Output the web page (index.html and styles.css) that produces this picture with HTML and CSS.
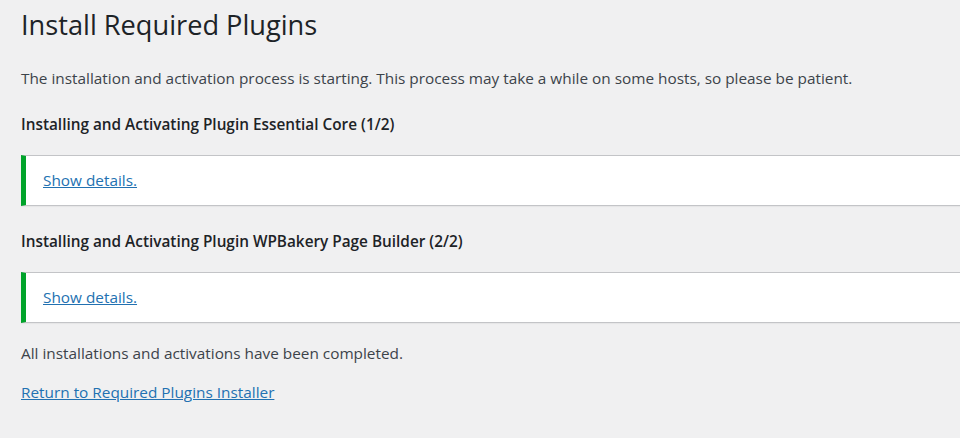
FILE: index.html
```html
<!DOCTYPE html>
<html lang="en">
<head>
<meta charset="utf-8">
<title>Install Required Plugins</title>
<link rel="stylesheet" href="styles.css">
</head>
<body>
<div class="wrap">
  <h1 class="title">Install Required Plugins</h1>
  <p class="text intro">The installation and activation process is starting. This process may take a while on some hosts, so please be patient.</p>

  <h2 class="step">Installing and Activating Plugin Essential Core (1/2)</h2>
  <div class="notice"><a href="#" class="link">Show details.</a></div>

  <h2 class="step step-next">Installing and Activating Plugin WPBakery Page Builder (2/2)</h2>
  <div class="notice"><a href="#" class="link">Show details.</a></div>

  <p class="text done">All installations and activations have been completed.</p>
  <p class="text back"><a href="#" class="link">Return to Required Plugins Installer</a></p>
</div>
</body>
</html>
```

FILE: styles.css
```css
html, body {
  margin: 0;
  padding: 0;
  background: #f0f0f1;
  overflow: hidden;
}

body {
  font-family: "Open Sans", "Noto Sans", sans-serif;
  color: #3c434a;
}

.wrap {
  padding: 0 0 0 21px;
}

.title {
  margin: 0;
  padding-top: 6px;
  font-size: 27.2px;
  line-height: 38px;
  font-weight: 400;
  color: #1d2327;
}

.text {
  margin: 0;
  font-size: 15.35px;
  line-height: 24px;
  color: #3c434a;
}

.intro {
  margin-top: 22px;
}

.step {
  margin: 22px 0 0;
  font-size: 15.35px;
  line-height: 24px;
  font-weight: 600;
  color: #1d2327;
}

.step-next {
  margin-top: 23px;
}

.notice {
  margin: 19px -30px 0 0;
  background: #fff;
  border: 1px solid #c3c4c7;
  border-left: 5px solid #00a32a;
  box-shadow: 0 1px 1px rgba(0, 0, 0, 0.04);
  padding: 12px 0 12px 17px;
  font-size: 15.35px;
  line-height: 25px;
}

.link {
  color: #2271b1;
  text-decoration: underline;
}

.done {
  margin-top: 18px;
}

.back {
  margin-top: 15px;
}
```
